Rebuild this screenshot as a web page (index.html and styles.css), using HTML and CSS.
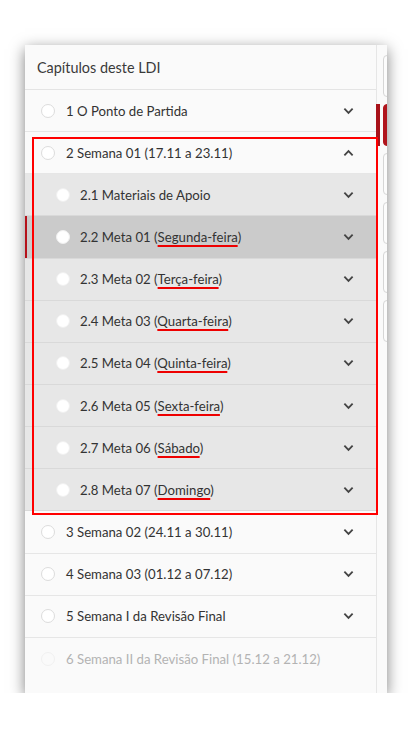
FILE: index.html
```html
<!DOCTYPE html>
<html lang="pt">
<head>
    <meta charset="UTF-8">
    <title>Capítulos deste LDI</title>
    <link rel="stylesheet" href="styles.css">
</head>
<body>
<div class="panel">
    <div class="toc">
        <div class="toc-head">Capítulos deste LDI</div>
        <ul class="chapters">
            <li class="chapter">
                <div class="row"><em class="dot"></em><span class="label">1 O Ponto de Partida</span><svg class="chev" viewBox="0 0 12 8"><path d="M1.5 1.5 6 6l4.5-4.5"/></svg></div>
            </li>
            <li class="chapter open">
                <div class="row"><em class="dot"></em><span class="label">2 Semana 01 (17.11 a 23.11)</span><svg class="chev" viewBox="0 0 12 8"><path d="M1.5 6.5 6 2l4.5 4.5"/></svg></div>
                <ul class="goals">
                    <li class="row sub"><em class="dot"></em><span class="label">2.1 Materiais de Apoio</span><svg class="chev" viewBox="0 0 12 8"><path d="M1.5 1.5 6 6l4.5-4.5"/></svg></li>
                    <li class="row sub active"><em class="dot"></em><span class="label">2.2 Meta 01 (<u>Segunda-feira</u>)</span><svg class="chev" viewBox="0 0 12 8"><path d="M1.5 1.5 6 6l4.5-4.5"/></svg></li>
                    <li class="row sub"><em class="dot"></em><span class="label">2.3 Meta 02 (<u>Terça-feira</u>)</span><svg class="chev" viewBox="0 0 12 8"><path d="M1.5 1.5 6 6l4.5-4.5"/></svg></li>
                    <li class="row sub"><em class="dot"></em><span class="label">2.4 Meta 03 (<u>Quarta-feira</u>)</span><svg class="chev" viewBox="0 0 12 8"><path d="M1.5 1.5 6 6l4.5-4.5"/></svg></li>
                    <li class="row sub"><em class="dot"></em><span class="label">2.5 Meta 04 (<u>Quinta-feira</u>)</span><svg class="chev" viewBox="0 0 12 8"><path d="M1.5 1.5 6 6l4.5-4.5"/></svg></li>
                    <li class="row sub"><em class="dot"></em><span class="label">2.6 Meta 05 (<u>Sexta-feira</u>)</span><svg class="chev" viewBox="0 0 12 8"><path d="M1.5 1.5 6 6l4.5-4.5"/></svg></li>
                    <li class="row sub"><em class="dot"></em><span class="label">2.7 Meta 06 (<u>Sábado</u>)</span><svg class="chev" viewBox="0 0 12 8"><path d="M1.5 1.5 6 6l4.5-4.5"/></svg></li>
                    <li class="row sub"><em class="dot"></em><span class="label">2.8 Meta 07 (<u>Domingo</u>)</span><svg class="chev" viewBox="0 0 12 8"><path d="M1.5 1.5 6 6l4.5-4.5"/></svg></li>
                </ul>
            </li>
            <li class="chapter">
                <div class="row"><em class="dot"></em><span class="label">3 Semana 02 (24.11 a 30.11)</span><svg class="chev" viewBox="0 0 12 8"><path d="M1.5 1.5 6 6l4.5-4.5"/></svg></div>
            </li>
            <li class="chapter">
                <div class="row"><em class="dot"></em><span class="label">4 Semana 03 (01.12 a 07.12)</span><svg class="chev" viewBox="0 0 12 8"><path d="M1.5 1.5 6 6l4.5-4.5"/></svg></div>
            </li>
            <li class="chapter">
                <div class="row"><em class="dot"></em><span class="label">5 Semana I da Revisão Final</span><svg class="chev" viewBox="0 0 12 8"><path d="M1.5 1.5 6 6l4.5-4.5"/></svg></div>
            </li>
            <li class="chapter locked">
                <div class="row"><em class="dot"></em><span class="label">6 Semana II da Revisão Final (15.12 a 21.12)</span></div>
            </li>
        </ul>
    </div>
    <div class="side">
        <div class="tab"><i></i><b></b></div>
        <div class="tab current"><i></i><b></b></div>
        <div class="tab"><i></i><b></b></div>
        <div class="tab"><i></i><b></b></div>
        <div class="tab"><i></i><b></b></div>
        <div class="tab"><i></i><b></b></div>
    </div>
    <div class="mark"></div>
</div>
</body>
</html>
```

FILE: styles.css
```css
* {
    margin: 0;
    padding: 0;
    box-sizing: border-box;
}

ul, li {
    list-style: none;
}

body {
    background: #ffffff;
    font-family: Lato, "Liberation Sans", sans-serif;
    color: #333333;
}

.panel {
    position: relative;
    display: flex;
    margin: 45px 0 0 25px;
    width: 362px;
    height: 648px;
    background: #fafafa;
    box-shadow: 0 4px 14px rgba(0, 0, 0, 0.5);
    overflow: hidden;
}

.toc {
    width: 352px;
    flex: none;
    border-right: 1px solid #e6e6e6;
}

.toc-head {
    height: 45px;
    padding: 0 12px;
    border-bottom: 1px solid #e4e4e4;
    display: flex;
    align-items: center;
    font-size: 14.4px;
    color: #3a3a3a;
}

.row {
    position: relative;
    display: flex;
    align-items: center;
    height: 42.15px;
    padding: 0 22px 0 16px;
    border-bottom: 1px solid #e6e6e6;
    font-size: 13.2px;
}

.row .dot {
    flex: none;
    width: 14px;
    height: 14px;
    border-radius: 50%;
    border: 1px solid #dcdcdc;
    background: #ffffff;
}

.row .label {
    flex: 1;
    margin-left: 11px;
    white-space: nowrap;
}

.row .chev {
    flex: none;
    width: 11px;
    height: 8px;
    fill: none;
    stroke: #444444;
    stroke-width: 2;
}

.goals .row {
    padding-left: 31px;
    background: #e7e7e7;
    border-bottom-color: #d9d9d9;
}

.goals .row .dot {
    border-color: #f0f0f0;
}

.goals .row .label {
    margin-left: 10px;
}

.goals .active {
    background: #cbcbcb;
}

.goals .active::before {
    content: "";
    position: absolute;
    left: 0;
    top: 0;
    bottom: 0;
    width: 2px;
    background: #b5121b;
}

.label u {
    text-decoration: underline #ee0000;
    text-decoration-thickness: 2px;
    text-underline-offset: 3px;
    text-decoration-skip-ink: none;
}

.locked .row {
    color: #b3b3b3;
    border-bottom: none;
}

.locked .row .dot {
    border-color: #f1f1f1;
    background: #fafafa;
}

.side {
    flex: 1;
    padding-top: 10px;
    display: flex;
    flex-direction: column;
    gap: 7px;
}

.tab {
    display: flex;
    height: 42px;
    margin-left: -1px;
}

.tab i {
    width: 4px;
    flex: none;
}

.tab b {
    width: 20px;
    flex: none;
    margin-left: 3px;
    border: 1px solid #d6d6d6;
    border-radius: 4px;
    background: #fcfcfc;
}

.tab.current i {
    background: #a8121a;
}

.tab.current b {
    background: #b0141c;
    border-color: #b0141c;
}

/* marcação em vermelho por cima da lista */
.mark {
    position: absolute;
    left: 7px;
    top: 92px;
    width: 346px;
    height: 378px;
    border: 2px solid #ff0000;
}
```
